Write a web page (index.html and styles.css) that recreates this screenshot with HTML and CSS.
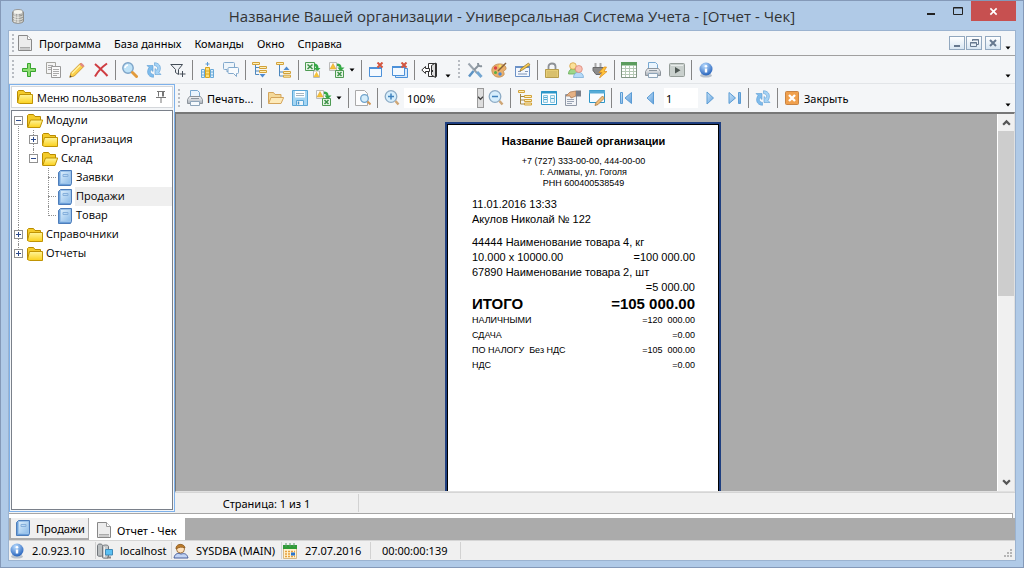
FILE: index.html
```html
<!DOCTYPE html>
<html lang="ru">
<head>
<meta charset="utf-8">
<title>Универсальная Система Учета - [Отчет - Чек]</title>
<link rel="stylesheet" href="styles.css">
</head>
<body>
<svg class="sprite" aria-hidden="true">
  <defs>
    <linearGradient id="gold" x1="0" y1="0" x2="0" y2="1"><stop offset="0" stop-color="#fff59a"/><stop offset="1" stop-color="#fbd01c"/></linearGradient>
    <linearGradient id="blue" x1="0" y1="0" x2="1" y2="1"><stop offset="0" stop-color="#c9e4fa"/><stop offset="1" stop-color="#5f9fdc"/></linearGradient>
    <linearGradient id="page" x1="0" y1="0" x2="1" y2="1"><stop offset="0" stop-color="#dceefc"/><stop offset="1" stop-color="#8cbbe8"/></linearGradient>
    <linearGradient id="steel" x1="0" y1="0" x2="0" y2="1"><stop offset="0" stop-color="#f4f6f8"/><stop offset="1" stop-color="#a9b0b8"/></linearGradient>
    <radialGradient id="ball" cx=".4" cy=".25" r=".8"><stop offset="0" stop-color="#b9dcff"/><stop offset="1" stop-color="#1e5cb8"/></radialGradient>
  </defs>
  <symbol id="i-app" viewBox="0 0 16 16"><path d="M2.500 4v9c0 3 11 3 11 0V4z" fill="#d3d3cd" stroke="#8c8c88"/><ellipse cx="8" cy="4" rx="5" ry="2.500" fill="#f4f4ee" stroke="#999"/><path d="M3 6.500c2 2 8 2 10 0M3 9c2 2 8 2 10 0M3 11.500c2 2 8 2 10 0" fill="none" stroke="#8f8f8b"/><path d="M5 5v9M8 6v9" stroke="#f4f4f0"/></symbol>
  <symbol id="i-doc" viewBox="0 0 16 16"><path d="M1.500.500h9l4 4v11h-13z" fill="#ececec" stroke="#888"/><path d="M10.500.500v4h4" fill="#fff" stroke="#999"/><path d="M3 12.500h10M3 14h10" stroke="#aaa"/></symbol>
  <symbol id="i-plus" viewBox="0 0 16 16"><path d="M6.500 1.500h3v5h5v3h-5v5h-3v-5h-5v-3h5z" fill="#8ddc72" stroke="#37a52e"/></symbol>
  <symbol id="i-copy" viewBox="0 0 16 16"><path d="M1.500.500h9v11h-9z" fill="#f4f4f4" stroke="#a5a5a0"/><path d="M3 3.500h5M3 5.500h3M3 7.500h3" stroke="#aaa"/><path d="M6.500 4.500h9v11h-9z" fill="#fafafa" stroke="#999"/><path d="M8 7.500h6M8 9.500h6M8 11.500h6M8 13.500h4" stroke="#aaa"/></symbol>
  <symbol id="i-pencil" viewBox="0 0 16 16"><path d="M.8 15.200l1.200-4.500L11.500 1.200l3.300 3.300-9.500 9.500z" fill="#fbd04c" stroke="#c88f1c" stroke-width=".8"/><path d="M10.500 2.200l3.300 3.300 1.500-2-2.800-2.800z" fill="#e28a84"/><path d="M3 11.500l8-8" stroke="#fff2a6" stroke-width="1.200"/><path d="M.6 15.400l2.200-.6-1.600-1.600z" fill="#444"/></symbol>
  <symbol id="i-x" viewBox="0 0 16 16"><path d="M2 2c4 3.500 9 8 12.500 12M14 1.500C9 5 5 9 2 14.500" fill="none" stroke="#cf3d42" stroke-width="2"/></symbol>
  <symbol id="i-find" viewBox="0 0 16 16"><circle cx="6" cy="6" r="5.200" fill="#bfe3f8" stroke="#7da4c8" stroke-width="1.400"/><path d="M3 6a3.500 3.500 0 0 1 3-3" fill="none" stroke="#fff" stroke-width="1.600"/><path d="M10.500 10.500l4 4" stroke="#e29b3d" stroke-width="3" stroke-linecap="round"/></symbol>
  <symbol id="i-refresh" viewBox="0 0 16 16"><path d="M1 3.500h6v6L5.200 7.800C3.500 9.800 4.500 12 7.500 12.500v2.800C1.500 15 .2 9.500 3 5.500z" fill="#7fbcec" stroke="#5b9cd4" stroke-width=".6"/><path d="M15 12.500H9v-6l1.800 1.700C12.500 6.200 11.500 4 8.500 3.500V.7C14.500 1 15.800 6.500 13 10.500z" fill="#a6d3f5" stroke="#5b9cd4" stroke-width=".6"/></symbol>
  <symbol id="i-filter" viewBox="0 0 16 16"><path d="M.8 2.500h11.700L8.500 7.500v5l-3-2v-3z" fill="#eef1f4" stroke="#444d57"/><path d="M12.500 9v6M9.500 12h6" stroke="#444d57"/></symbol>
  <symbol id="i-colfind" viewBox="0 0 16 16"><path d="M2.500 7.500h3v8h-3zM11.500 7.500h3v8h-3z" fill="#dff0fb" stroke="#68a9d8"/><path d="M2 10h4M2 13h4M11 10h4M11 13h4" stroke="#68a9d8"/><path d="M6.500 5.500h4v10h-4z" fill="#ffe178" stroke="#d9a41d"/><path d="M7 9h3M7 12h3" stroke="#d9a41d"/><path d="M8.500 0v4M6.500 2h4" stroke="#5b9bd5"/></symbol>
  <symbol id="i-chat" viewBox="0 0 16 16"><path d="M1.500.500h9q1 0 1 1v5q0 1-1 1h-4L4 10V7.500H1.500q-1 0-1-1v-5q0-1 1-1z" fill="#eef5fa" stroke="#82a9cc"/><path d="M6 5.500h8.500q1 0 1 1v4q0 1-1 1h-1V14.500l-3-3H6q-1 0-1-1v-4q0-1 1-1z" fill="#f8fbfd" stroke="#82a9cc"/></symbol>
  <symbol id="i-tree" viewBox="0 0 16 16"><path d="M3.500 4v10H8M3.500 6.500H8M3.500 10H8" fill="none" stroke="#a08444"/><path d="M1.500.500h6v2h-6zM7.500 5.500h7v2h-7zM7.500 9.500h7v2h-7zM7.500 13h7v2h-7z" fill="#fff0b8" stroke="#d2a23b"/></symbol>
  <symbol id="i-treedown" viewBox="0 0 16 16"><path d="M3.500 3v9.500H7M3.500 5.500H7M3.500 9H7" fill="none" stroke="#4e88bd"/><path d="M.5.500h7v2h-7zM7.500 4.500h7v2h-7zM7.500 8.500h7v2h-7z" fill="#fff0b8" stroke="#d2a23b"/><path d="M7.500 12h6l-3 3.500z" fill="#4f8bd0"/></symbol>
  <symbol id="i-treeup" viewBox="0 0 16 16"><path d="M3.500 3v11H7M3.500 10H7" fill="none" stroke="#4e88bd"/><path d="M.5.500h7v2h-7zM7.500 9.500h7v2h-7zM7.500 13.200h7v2h-7z" fill="#fff0b8" stroke="#d2a23b"/><path d="M7.500 8h6l-3-3.500z" fill="#4f8bd0"/></symbol>
  <symbol id="i-xlimp" viewBox="0 0 16 16"><path d="M.5.500h9v8h-9z" fill="#e7f5e6" stroke="#4e9b53"/><path d="M2.500 2.500l5 4.500M7.500 2.500l-5 4.500" stroke="#3b9146" stroke-width="1.500"/><path d="M9 1.500q4.500 0 4.500 4.500h2l-3.300 3.500L9 6h2q0-2-2-2z" fill="#35a846"/><path d="M8.500 9h6v6.500h-6z" fill="#fff" stroke="#b9b9b9"/><path d="M8.500 15l3-5.500L14.500 15z" fill="#f6c33b"/></symbol>
  <symbol id="i-xlexp" viewBox="0 0 16 16"><path d="M.5.500h7v8h-7z" fill="#fafafa" stroke="#bbb"/><path d="M1 7L4 1.500 7 7z" fill="#f6c33b" stroke="#d99d20" stroke-width=".5"/><path d="M8 1.500q4.500 0 4.500 4h3l-4 4-3-4h2q0-1.500-2.500-1.500z" fill="#35a846"/><path d="M6.500 8.500h8v7h-8z" fill="#e7f5e6" stroke="#4e9b53"/><path d="M8.500 10l4 4M12.500 10l-4 4" stroke="#3b9146" stroke-width="1.500"/></symbol>
  <symbol id="i-winx" viewBox="0 0 16 16"><path d="M1.500 5.500h12v9h-12z" fill="#f3f9ff" stroke="#4c91d9"/><path d="M1 6h13" stroke="#4c91d9" stroke-width="2"/><path d="M9.500.500l5 5M14.500.500l-5 5" stroke="#d3553f" stroke-width="2"/></symbol>
  <symbol id="i-winsx" viewBox="0 0 16 16"><path d="M3.500 6.500h12v9h-12z" fill="#d7e9fb" stroke="#4c91d9"/><path d="M.5 4.500h12v9H.5z" fill="#f3f9ff" stroke="#4c91d9"/><path d="M0 5h13" stroke="#4c91d9" stroke-width="2"/><path d="M9.500.500l5 5M14.500.500l-5 5" stroke="#d3553f" stroke-width="2"/></symbol>
  <symbol id="i-exit" viewBox="0 0 16 16"><path d="M7.500 1.500h8v13h-8z" fill="#fff" stroke="#333"/><path d="M10.500 3.500l4-2.500v14.500l-4-2.500z" fill="#ddd" stroke="#333"/><path d="M11.500 8v2" stroke="#333"/><path d="M.8 8L4.500 4.500v2h4v3h-4v2z" fill="#fff" stroke="#333"/></symbol>
  <symbol id="i-tools" viewBox="0 0 16 16"><path d="M1.500 1.500L10 11" stroke="#9aa4ad" stroke-width="2"/><path d="M10 10l4.500 5" stroke="#73a6d1" stroke-width="3"/><path d="M6.500 9L2 14.500" stroke="#5c93c4" stroke-width="2.500"/><path d="M7 8l5-5" stroke="#8a949d" stroke-width="2"/><path d="M11 1q0 4 4 3" fill="none" stroke="#8a949d" stroke-width="2"/></symbol>
  <symbol id="i-palette" viewBox="0 0 16 16"><path d="M.8 8c0-7 12-8 14-3 1 3-1 3-2 4s2 3-1 5c-5 3-11 0-11-6z" fill="#e9b06d" stroke="#c08d50" stroke-width=".8"/><circle cx="4.500" cy="6" r="1.700" fill="#d44"/><circle cx="9" cy="4" r="1.500" fill="#f9e35b"/><circle cx="4.500" cy="10.500" r="1.500" fill="#56ae45"/><circle cx="9" cy="12" r="1.700" fill="#4787d9"/><path d="M7 9l8-8" stroke="#876239" stroke-width="1.500"/></symbol>
  <symbol id="i-note" viewBox="0 0 16 16"><path d="M.5 4.500h14v10H.5z" fill="#f4f8fe" stroke="#6c92c7"/><path d="M3 9.500h3M3 12h9M10 9.500h3" stroke="#7f95b6"/><path d="M0 5h15" stroke="#6c92c7" stroke-width="2"/><path d="M5 9l1-2.500L13.500 1l1.500 2-7.500 5z" fill="#f6cb51" stroke="#94702a" stroke-width=".7"/></symbol>
  <symbol id="i-lock" viewBox="0 0 16 16"><path d="M4.500 8V4.500c0-4 7-4 7 0V8" fill="none" stroke="#8d9195" stroke-width="1.800"/><path d="M1.500 7.500h13v8h-13z" fill="#e6ce77" stroke="#b59c4d"/><path d="M3 10h10M3 12h10M3 14h10" stroke="#cbb262"/></symbol>
  <symbol id="i-users" viewBox="0 0 16 16"><path d="M.5 12c0-7 9-7 9 0z" fill="#9ed78a" stroke="#65ac55" stroke-width=".8"/><circle cx="5" cy="4" r="3.300" fill="#fbe29a" stroke="#d4a141" stroke-width=".8"/><path d="M5.500 15.500c0-7 10-7 10 0z" fill="#b5daf8" stroke="#7aafd8" stroke-width=".8"/><circle cx="10.800" cy="7" r="3.500" fill="#f9c0b3" stroke="#dc8877" stroke-width=".8"/></symbol>
  <symbol id="i-plug" viewBox="0 0 16 16"><path d="M3.500 1v5M8.500 1v5" stroke="#aaa" stroke-width="2"/><path d="M1 5.500h10v3l-3 4H4L1 8.500z" fill="#8b8b8b" stroke="#6a6a6a"/><path d="M12 5l-5 5.500h3L7.500 16 15 9.500h-3L14.500 5z" fill="#ffc43b" stroke="#dc8b19" stroke-width=".7"/></symbol>
  <symbol id="i-grid" viewBox="0 0 16 16"><path d="M.5.500h15v15H.5z" fill="#fff" stroke="#809482"/><path d="M0 0h16v3.500H0z" fill="#5b9c5d"/><path d="M1 6.500h14M1 9.500h14M1 12.500h14M4.500 4v11M8.500 4v11M12.500 4v11" stroke="#b5c9b5"/></symbol>
  <symbol id="i-print" viewBox="0 0 16 16"><path d="M3.500 8V.5h7l2 2V8" fill="#eaf5fe" stroke="#78a8d1"/><path d="M.5 9.500l2-3h11l2 3v4H.5z" fill="url(#steel)" stroke="#8d949b"/><path d="M3.500 11.500h9v4h-9z" fill="#f6fafd" stroke="#8fa6bb"/><path d="M4 8.500h8" stroke="#8b959e"/></symbol>
  <symbol id="i-play" viewBox="0 0 16 16"><rect x=".5" y="1.500" width="15" height="13" rx="1" fill="#c9d0cd" stroke="#959d99"/><path d="M2 3.500h12" stroke="#e8ecea"/><path d="M6 5v6.500L11.500 8.200z" fill="#4f5854"/></symbol>
  <symbol id="i-info" viewBox="0 0 16 16"><ellipse cx="8" cy="13.500" rx="6" ry="2" fill="#b9c2cc"/><circle cx="8" cy="7" r="6.500" fill="url(#ball)"/><path d="M8 6.500v4" stroke="#fff" stroke-width="2.400"/><circle cx="8" cy="4.300" r="1.300" fill="#fff"/></symbol>
  <symbol id="i-folder" viewBox="0 0 16 16"><path d="M.5 13.500v-11l1-1h5l1.500 2h5.500V6" fill="#f4cb2a" stroke="#b98b00"/><path d="M2.500 5.500h13v9h-13l-2-1z" fill="url(#gold)" stroke="#c09405"/></symbol>
  <symbol id="i-folderopen" viewBox="0 0 16 16"><path d="M.5 14v-11.500l1-1h5l1.500 2h5.500V7" fill="#f4cb2a" stroke="#b98b00"/><path d="M3.500 7h12.200L13 14.500H.7z" fill="url(#gold)" stroke="#c09405"/></symbol>
  <symbol id="i-open" viewBox="0 0 16 16"><path d="M.5 13.500v-11h5l1.500 2h6v3" fill="#f4d99a" stroke="#d4a55c"/><path d="M3 7.500h12.700L13 13.500H.6z" fill="#fdeab9" stroke="#d4a55c"/></symbol>
  <symbol id="i-save" viewBox="0 0 16 16"><path d="M.5.500h15v15H.5z" fill="#a4d5f3" stroke="#5ba6d6"/><path d="M3 1h10v6.500H3z" fill="#fff"/><path d="M4 3.500h8M4 5.500h8" stroke="#a3b4c0"/><path d="M4.500 10.500h7v5h-7z" fill="#eef6fb" stroke="#5ba6d6"/><path d="M6.500 11.500v3" stroke="#4591c7" stroke-width="1.500"/></symbol>
  <symbol id="i-preview" viewBox="0 0 16 16"><path d="M.5.500h9l3 3v12H.5z" fill="#fdfdfd" stroke="#aaa"/><circle cx="9.500" cy="8.500" r="3.800" fill="#d6eefb" stroke="#6fa3cc" stroke-width="1.300"/><path d="M12.500 11.500l3 3" stroke="#d19857" stroke-width="2"/></symbol>
  <symbol id="i-zoomin" viewBox="0 0 16 16"><circle cx="7" cy="6.500" r="5.800" fill="#d6eefc" stroke="#8cabc5" stroke-width="1.300"/><path d="M4 6.500h6M7 3.500v6" stroke="#3f82bd" stroke-width="1.500"/><path d="M11.500 11l3 3.500" stroke="#cfa675" stroke-width="2.500"/></symbol>
  <symbol id="i-zoomout" viewBox="0 0 16 16"><circle cx="7" cy="6.500" r="5.800" fill="#d6eefc" stroke="#8cabc5" stroke-width="1.300"/><path d="M4 6.500h6" stroke="#3f82bd" stroke-width="1.500"/><path d="M11.500 11l3 3.500" stroke="#cfa675" stroke-width="2.500"/></symbol>
  <symbol id="i-panes" viewBox="0 0 16 16"><path d="M.5 1.500h15v13H.5z" fill="#fff" stroke="#2c96c8"/><path d="M0 2.500h16" stroke="#2c96c8" stroke-width="2"/><path d="M2.500 5.500h4v7h-4zM9.500 5.500h4v7h-4z" fill="#e4f4fb" stroke="#8cc6e0"/><path d="M3 7.500h3M3 9.500h3M10 8.500h3" stroke="#57acd3"/></symbol>
  <symbol id="i-hand" viewBox="0 0 16 16"><path d="M.5 4.500h11v11H.5z" fill="#f2f4f7" stroke="#9098a5"/><path d="M2 9.500h7M2 11.500h7M2 13.500h5" stroke="#9aa4b4"/><path d="M1 6l4-4 6-1v5L6 8 5 6z" fill="#e5b184" stroke="#a3744f" stroke-width=".7"/><path d="M11 .5h5v6h-5z" fill="#7b7f89"/></symbol>
  <symbol id="i-winedit" viewBox="0 0 16 16"><path d="M.5.500h15v12H.5z" fill="#f7fcff" stroke="#2c96c8"/><path d="M0 2h16" stroke="#55abd7" stroke-width="3"/><path d="M6 15.500l1-3L13.500 6l2 2L9 14.500z" fill="#f0bd78" stroke="#a97840" stroke-width=".8"/></symbol>
  <symbol id="i-first" viewBox="0 0 16 16"><path d="M2.500 2.500h2v11h-2zM13.500 2.500v11L7 8z" fill="url(#blue)" stroke="#5b9cd4"/></symbol>
  <symbol id="i-prev" viewBox="0 0 16 16"><path d="M11.500 2v12L5 8z" fill="url(#blue)" stroke="#5b9cd4"/></symbol>
  <symbol id="i-next" viewBox="0 0 16 16"><path d="M5 2v12l6.500-6z" fill="url(#blue)" stroke="#5b9cd4"/></symbol>
  <symbol id="i-last" viewBox="0 0 16 16"><path d="M12.500 2.500h2v11h-2zM3 2.500v11L9.500 8z" fill="url(#blue)" stroke="#5b9cd4"/></symbol>
  <symbol id="i-close" viewBox="0 0 16 16"><rect x="1.500" y="1.500" width="13" height="13" rx="1" fill="#f0a04d" stroke="#c98443"/><path d="M5 5l6 6M11 5l-6 6" stroke="#fff" stroke-width="2.400"/></symbol>
  <symbol id="i-book" viewBox="0 0 16 16"><path d="M1.500 2.500l2-2h11v13l-1 2h-12z" fill="#6b9fd8" stroke="#4d7dbb"/><path d="M3.500 1.500h10v12h-10z" fill="url(#page)" stroke="#9cc3ea"/><path d="M6 4.500h5v2H6z" fill="none" stroke="#86b0dc"/></symbol>
  <symbol id="i-pin" viewBox="0 0 12 14"><path d="M2 1.500h8M3.500 1.500v5M8.500 1.500v5M7.500 1.500v5M1 7.500h10M6 7.500V13" fill="none" stroke="#777"/></symbol>
  <symbol id="i-servers" viewBox="0 0 16 16"><path d="M.5 2.500c0-2 5-2 5 0v10c0 1-5 1-5 0z" fill="#b9bdbf" stroke="#70757a"/><path d="M5.500 3.500c0-2 6-2 6 0v11c0 1-6 1-6 0z" fill="#c7cacc" stroke="#70757a"/><path d="M7.500 4v10" stroke="#eee"/><path d="M8.500 6.500h7v5.500h-7z" fill="#5cc0f2" stroke="#3f8ab8"/><path d="M10 14.500h4" stroke="#888" stroke-width="2"/></symbol>
  <symbol id="i-user" viewBox="0 0 16 16"><path d="M1 15c1-5 4-5 7-4 4-1 6 0 7 4z" fill="#c1d3f4" stroke="#495f9b"/><circle cx="7.500" cy="6" r="4" fill="#ffe2bd" stroke="#8b5a22" stroke-width=".8"/><path d="M3 6C2.500 0 11.500 0 12 5 8.500 3.500 6.500 4 3 6z" fill="#bd7d2c" stroke="#8b5a22" stroke-width=".8"/></symbol>
  <symbol id="i-calendar" viewBox="0 0 16 16"><path d="M1.500 3.500h13v12h-13z" fill="#fff2cf" stroke="#d6b984"/><path d="M1 2h14v4H1z" fill="#2f9b35"/><path d="M4 0v4M8 0v4M12 0v4" stroke="#596"/><path d="M3 8.500h10M3 11h10M3 13.500h10" stroke="#e8a03b" stroke-width="1.500" stroke-dasharray="2 1"/><path d="M9 9.500h4v3H9z" fill="#2b75cc"/></symbol>
  <symbol id="i-drop" viewBox="0 0 6 4"><path d="M.5.500h5L3 3.500z" fill="#000"/></symbol>
  <symbol id="i-minus" viewBox="0 0 9 9"><path d="M2 4.500h5" stroke="#2c4a8c"/></symbol>
  <symbol id="i-expand" viewBox="0 0 9 9"><path d="M2 4.500h5M4.500 2v5" stroke="#2c4a8c"/></symbol>
</svg>

<div class="window">
  <header class="titlebar">
    <svg class="icon"><use href="#i-app"/></svg>
    <h1 class="title">Название Вашей организации - Универсальная Система Учета - [Отчет - Чек]</h1>
    <div class="window-buttons">
      <button class="win-btn" aria-label="Свернуть"><svg class="win-glyph" viewBox="0 0 10 10"><path d="M1 8h8" stroke="#222" stroke-width="2"/></svg></button>
      <button class="win-btn" aria-label="Развернуть"><svg class="win-glyph" viewBox="0 0 10 10"><path d="M.5 1.500h9v7h-9zM.5 2h9" fill="none" stroke="#222"/></svg></button>
      <button class="win-btn win-close" aria-label="Закрыть окно"><svg class="win-glyph win-glyph-x" viewBox="0 0 10 10"><path d="M1.500 1.500l7 7M8.500 1.500l-7 7" stroke="#fff" stroke-width="1.800"/></svg></button>
    </div>
  </header>

  <div class="client">
    <nav class="menubar">
      <span class="grip"></span>
      <svg class="icon menu-icon"><use href="#i-doc"/></svg>
      <button class="menu">Программа</button>
      <button class="menu">База данных</button>
      <button class="menu">Команды</button>
      <button class="menu">Окно</button>
      <button class="menu">Справка</button>
      <div class="mdi">
        <button class="mdi-btn" aria-label="Свернуть отчет"><svg viewBox="0 0 14 12"><path d="M4 9h6" stroke="#66788f" stroke-width="2"/></svg></button>
        <button class="mdi-btn" aria-label="Восстановить отчет"><svg viewBox="0 0 14 12"><path d="M5.500 4V2.500h6v5H10M3.500 5.500h6v4h-6zM5 3h7M3 6h7" fill="none" stroke="#66788f"/></svg></button>
        <button class="mdi-btn mdi-close" aria-label="Закрыть отчет"><svg viewBox="0 0 14 12"><path d="M4 3l6 6M10 3L4 9" stroke="#66788f" stroke-width="2"/></svg></button>
      </div>
      <button class="more" aria-label="Настройка меню"><svg class="drop"><use href="#i-drop"/></svg></button>
    </nav>

    <div class="toolbar toolbar-main">
      <span class="grip"></span>
      <button class="tool" aria-label="Добавить"><svg class="icon"><use href="#i-plus"/></svg></button>
      <button class="tool" aria-label="Копировать"><svg class="icon"><use href="#i-copy"/></svg></button>
      <button class="tool" aria-label="Изменить"><svg class="icon"><use href="#i-pencil"/></svg></button>
      <button class="tool" aria-label="Удалить"><svg class="icon"><use href="#i-x"/></svg></button>
      <span class="sep"></span>
      <button class="tool" aria-label="Поиск"><svg class="icon"><use href="#i-find"/></svg></button>
      <button class="tool" aria-label="Обновить"><svg class="icon"><use href="#i-refresh"/></svg></button>
      <button class="tool" aria-label="Фильтр"><svg class="icon"><use href="#i-filter"/></svg></button>
      <span class="sep"></span>
      <button class="tool" aria-label="Столбцы"><svg class="icon"><use href="#i-colfind"/></svg></button>
      <button class="tool" aria-label="Примечания"><svg class="icon"><use href="#i-chat"/></svg></button>
      <span class="sep"></span>
      <button class="tool" aria-label="Развернуть все"><svg class="icon"><use href="#i-treedown"/></svg></button>
      <button class="tool" aria-label="Свернуть все"><svg class="icon"><use href="#i-treeup"/></svg></button>
      <span class="sep"></span>
      <button class="tool" aria-label="Импорт"><svg class="icon"><use href="#i-xlimp"/></svg></button>
      <button class="tool" aria-label="Экспорт"><svg class="icon"><use href="#i-xlexp"/></svg></button>
      <button class="tool-drop" aria-label="Варианты экспорта"><svg class="drop"><use href="#i-drop"/></svg></button>
      <span class="sep"></span>
      <button class="tool" aria-label="Закрыть вкладку"><svg class="icon"><use href="#i-winx"/></svg></button>
      <button class="tool" aria-label="Закрыть все вкладки"><svg class="icon"><use href="#i-winsx"/></svg></button>
      <span class="sep"></span>
      <button class="tool" aria-label="Выход"><svg class="icon"><use href="#i-exit"/></svg></button>
      <button class="more" aria-label="Настройка панели"><svg class="drop"><use href="#i-drop"/></svg></button>
      <span class="grip"></span>
      <button class="tool" aria-label="Настройки"><svg class="icon"><use href="#i-tools"/></svg></button>
      <button class="tool" aria-label="Оформление"><svg class="icon"><use href="#i-palette"/></svg></button>
      <button class="tool" aria-label="Редактор"><svg class="icon"><use href="#i-note"/></svg></button>
      <span class="sep"></span>
      <button class="tool" aria-label="Блокировка"><svg class="icon"><use href="#i-lock"/></svg></button>
      <button class="tool" aria-label="Пользователи"><svg class="icon"><use href="#i-users"/></svg></button>
      <button class="tool" aria-label="Подключение"><svg class="icon"><use href="#i-plug"/></svg></button>
      <span class="sep"></span>
      <button class="tool" aria-label="Таблица"><svg class="icon"><use href="#i-grid"/></svg></button>
      <button class="tool" aria-label="Печать таблицы"><svg class="icon"><use href="#i-print"/></svg></button>
      <button class="tool" aria-label="Видео"><svg class="icon"><use href="#i-play"/></svg></button>
      <span class="sep"></span>
      <button class="tool" aria-label="О программе"><svg class="icon"><use href="#i-info"/></svg></button>
      <button class="more more-end" aria-label="Еще"><svg class="drop"><use href="#i-drop"/></svg></button>
    </div>

    <div class="workspace">
      <aside class="sidebar">
        <div class="sidebar-head">
          <svg class="icon"><use href="#i-folder"/></svg>
          <h2 class="sidebar-title">Меню пользователя</h2>
          <button class="pin" aria-label="Закрепить"><svg class="pin-icon"><use href="#i-pin"/></svg></button>
        </div>
        <ul class="tree">
          <li class="node">
            <div class="row"><button class="toggle" aria-label="Свернуть Модули"><svg><use href="#i-minus"/></svg></button><svg class="icon"><use href="#i-folderopen"/></svg><a class="label" href="#modules">Модули</a></div>
            <ul class="branch">
              <li class="node">
                <div class="row"><button class="toggle" aria-label="Развернуть Организация"><svg><use href="#i-expand"/></svg></button><svg class="icon"><use href="#i-folder"/></svg><a class="label" href="#org">Организация</a></div>
              </li>
              <li class="node">
                <div class="row"><button class="toggle" aria-label="Свернуть Склад"><svg><use href="#i-minus"/></svg></button><svg class="icon"><use href="#i-folderopen"/></svg><a class="label" href="#stock">Склад</a></div>
                <ul class="branch">
                  <li class="node"><div class="row"><span class="leaf"></span><svg class="icon"><use href="#i-book"/></svg><a class="label" href="#orders">Заявки</a></div></li>
                  <li class="node"><div class="row"><span class="leaf"></span><svg class="icon"><use href="#i-book"/></svg><a class="label selected" href="#sales">Продажи</a></div></li>
                  <li class="node"><div class="row"><span class="leaf"></span><svg class="icon"><use href="#i-book"/></svg><a class="label" href="#goods">Товар</a></div></li>
                </ul>
              </li>
            </ul>
          </li>
          <li class="node">
            <div class="row"><button class="toggle" aria-label="Развернуть Справочники"><svg><use href="#i-expand"/></svg></button><svg class="icon"><use href="#i-folder"/></svg><a class="label" href="#refs">Справочники</a></div>
          </li>
          <li class="node">
            <div class="row"><button class="toggle" aria-label="Развернуть Отчеты"><svg><use href="#i-expand"/></svg></button><svg class="icon"><use href="#i-folder"/></svg><a class="label" href="#reports">Отчеты</a></div>
          </li>
        </ul>
      </aside>

      <main class="report">
        <div class="toolbar">
          <span class="grip"></span>
          <button class="tool-text tool-print"><svg class="icon"><use href="#i-print"/></svg>Печать...</button>
          <span class="sep"></span>
          <button class="tool" aria-label="Открыть"><svg class="icon"><use href="#i-open"/></svg></button>
          <button class="tool" aria-label="Сохранить"><svg class="icon"><use href="#i-save"/></svg></button>
          <button class="tool" aria-label="Экспорт отчета"><svg class="icon"><use href="#i-xlexp"/></svg></button>
          <button class="tool-drop" aria-label="Форматы экспорта"><svg class="drop"><use href="#i-drop"/></svg></button>
          <span class="sep"></span>
          <button class="tool" aria-label="Найти в отчете"><svg class="icon"><use href="#i-preview"/></svg></button>
          <span class="sep"></span>
          <button class="tool" aria-label="Увеличить"><svg class="icon"><use href="#i-zoomin"/></svg></button>
          <div class="zoom">
            <select class="zoom-select" aria-label="Масштаб"><option>100%</option></select>
            <span class="zoom-arrow"><svg viewBox="0 0 6 6"><path d="M0 1.500l3 3 3-3" fill="none" stroke="#444" stroke-width="1.500"/></svg></span>
          </div>
          <button class="tool" aria-label="Уменьшить"><svg class="icon"><use href="#i-zoomout"/></svg></button>
          <span class="sep"></span>
          <button class="tool" aria-label="Структура"><svg class="icon"><use href="#i-tree"/></svg></button>
          <button class="tool" aria-label="Миниатюры"><svg class="icon"><use href="#i-panes"/></svg></button>
          <button class="tool" aria-label="Параметры страницы"><svg class="icon"><use href="#i-hand"/></svg></button>
          <button class="tool" aria-label="Редактировать страницу"><svg class="icon"><use href="#i-winedit"/></svg></button>
          <span class="sep"></span>
          <button class="tool" aria-label="Первая страница"><svg class="icon"><use href="#i-first"/></svg></button>
          <button class="tool" aria-label="Предыдущая страница"><svg class="icon"><use href="#i-prev"/></svg></button>
          <input class="page-input" type="text" value="1" aria-label="Номер страницы">
          <button class="tool" aria-label="Следующая страница"><svg class="icon"><use href="#i-next"/></svg></button>
          <button class="tool" aria-label="Последняя страница"><svg class="icon"><use href="#i-last"/></svg></button>
          <span class="sep"></span>
          <button class="tool" aria-label="Обновить отчет"><svg class="icon"><use href="#i-refresh"/></svg></button>
          <span class="sep"></span>
          <button class="tool-text"><svg class="icon"><use href="#i-close"/></svg>Закрыть</button>
          <button class="more more-end" aria-label="Еще команды"><svg class="drop"><use href="#i-drop"/></svg></button>
        </div>

        <div class="preview">
          <div class="canvas">
            <article class="receipt">
              <h3 class="org">Название Вашей организации</h3>
              <div class="contacts">
                <p>+7 (727) 333-00-00, 444-00-00</p>
                <p>г. Алматы, ул. Гоголя</p>
                <p>РНН 600400538549</p>
              </div>
              <div class="issued">
                <p>11.01.2016 13:33</p>
                <p>Акулов Николай № 122</p>
              </div>
              <div class="items">
                <p>44444 Наименование товара 4, кг</p>
                <p class="line"><span>10.000 x 10000.00</span><span>=100 000.00</span></p>
                <p>67890 Наименование товара 2, шт</p>
                <p class="line line-end"><span>=5 000.00</span></p>
              </div>
              <p class="line total"><span>ИТОГО</span><span>=105 000.00</span></p>
              <div class="payments">
                <p class="line"><span>НАЛИЧНЫМИ</span><span>=120&nbsp; 000.00</span></p>
                <p class="line"><span>СДАЧА</span><span>=0.00</span></p>
                <p class="line"><span>ПО НАЛОГУ&nbsp; Без НДС</span><span>=105&nbsp; 000.00</span></p>
                <p class="line"><span>НДС</span><span>=0.00</span></p>
              </div>
            </article>
          </div>
          <div class="scrollbar">
            <button class="scroll-btn" aria-label="Вверх"><svg viewBox="0 0 8 8"><path d="M1 6l3-3 3 3" fill="none" stroke="#555" stroke-width="2"/></svg></button>
            <div class="scroll-track"><div class="scroll-thumb"></div></div>
            <button class="scroll-btn" aria-label="Вниз"><svg viewBox="0 0 8 8"><path d="M1 2l3 3 3-3" fill="none" stroke="#555" stroke-width="2"/></svg></button>
          </div>
        </div>
        <div class="page-status"><span class="page-count">Страница: 1 из 1</span></div>
      </main>
    </div>

    <div class="tabs-edge"></div>
    <div class="tabs">
      <button class="tab"><svg class="icon"><use href="#i-book"/></svg>Продажи</button>
      <button class="tab tab-active"><svg class="icon"><use href="#i-doc"/></svg>Отчет - Чек</button>
    </div>

    <footer class="statusbar">
      <span class="cell cell-version"><svg class="icon"><use href="#i-info"/></svg>2.0.923.10</span>
      <span class="cell cell-host"><svg class="icon"><use href="#i-servers"/></svg>localhost</span>
      <span class="cell cell-user"><svg class="icon"><use href="#i-user"/></svg>SYSDBA (MAIN)</span>
      <span class="cell cell-date"><svg class="icon"><use href="#i-calendar"/></svg>27.07.2016</span>
      <span class="cell cell-time">00:00:00:139</span>
      <svg class="resize" viewBox="0 0 9 9"><path d="M7 0h2v2H7zM4 3h2v2H4zM7 3h2v2H7zM1 6h2v2H1zM4 6h2v2H4zM7 6h2v2H7z" fill="#b5b5b5"/></svg>
    </footer>
  </div>
</div>
</body>
</html>
```
FILE: styles.css
```css
* {
  box-sizing: border-box;
}

body,
h1,
h2,
h3,
p,
ul {
  margin: 0;
  padding: 0;
}

ul {
  list-style: none;
}

body {
  font-family: "Noto Sans", "DejaVu Sans", sans-serif;
  font-size: 11px;
  color: #000;
}

button,
input,
select {
  font: inherit;
  color: inherit;
  margin: 0;
  padding: 0;
  border: 0;
  background: none;
}

button {
  display: flex;
  align-items: center;
  justify-content: center;
  flex: none;
  white-space: nowrap;
}

svg {
  display: block;
  flex: none;
}

.sprite {
  position: absolute;
  width: 0;
  height: 0;
}

.icon {
  width: 16px;
  height: 16px;
}

/* Window frame */

.window {
  display: flex;
  flex-direction: column;
  height: 100vh;
  padding: 0 7px 6px;
  border: 1px solid #8499b8;
  background: #b0cae7;
}

.titlebar {
  display: grid;
  grid-template-columns: 135px 1fr 135px;
  flex: none;
  height: 29px;
}

.titlebar .icon {
  align-self: center;
  margin-left: 2px;
}

.title {
  align-self: center;
  font-family: "Open Sans", "Noto Sans", sans-serif;
  font-size: 15px;
  font-weight: 400;
  line-height: 20px;
  text-align: center;
  color: #333;
  white-space: nowrap;
}

.window-buttons {
  display: flex;
  justify-content: flex-end;
  align-items: flex-start;
}

.win-btn {
  width: 27px;
  height: 20px;
}

.win-close {
  width: 45px;
  background: #c75050;
}

.win-glyph {
  width: 10px;
  height: 10px;
}

.win-glyph-x {
  width: 9px;
  height: 9px;
}

.client {
  display: flex;
  flex-direction: column;
  flex: 1;
  min-height: 0;
  border: 1px solid #9bb3d0;
  background: #f4f6f8;
}

/* Menu and toolbars */

.menubar {
  display: flex;
  align-items: center;
  flex: none;
  height: 25px;
  border-bottom: 1px solid #a0a0a0;
}

.grip {
  flex: none;
  width: 2px;
  height: 19px;
  margin: 0 3px;
  background: repeating-linear-gradient(#b8bcc2 0 2px, transparent 2px 4px);
}

.menu {
  height: 22px;
  margin-right: 1px;
  padding: 0 6px;
}

.mdi {
  display: flex;
  gap: 1px;
  margin-left: auto;
}

.mdi-btn {
  width: 16px;
  height: 14px;
  border: 1px solid #92a8bf;
  background: linear-gradient(#fff, #d8e6f3);
}

.mdi-btn svg {
  width: 14px;
  height: 12px;
}

.mdi-close {
  margin-left: 2px;
}

.more {
  align-items: flex-end;
  align-self: stretch;
  width: 14px;
  padding-bottom: 5px;
}

.more-end {
  margin-left: auto;
}

.drop {
  width: 6px;
  height: 4px;
}

.toolbar {
  display: flex;
  align-items: center;
  flex: none;
  height: 28px;
}

.toolbar-main {
  border-bottom: 1px solid #e2e5e8;
}

.tool {
  width: 24px;
  height: 24px;
}

.tool-drop {
  width: 10px;
  height: 24px;
  justify-content: flex-start;
}

.tool-text {
  height: 24px;
  gap: 4px;
  padding-left: 4px;
}

.tool-print {
  width: 76px;
  justify-content: flex-start;
}

.sep {
  flex: none;
  width: 1px;
  height: 20px;
  margin: 0 2px;
  background: #858585;
}

.zoom {
  position: relative;
  width: 80px;
  height: 20px;
}

.zoom-select {
  appearance: none;
  width: 100%;
  height: 20px;
  padding-left: 3px;
  background: #fff;
}

.zoom-arrow {
  position: absolute;
  top: 0;
  right: 0;
  display: flex;
  align-items: center;
  width: 7px;
  height: 20px;
  border: 1px solid #9a9a9a;
  background: #ddd;
  pointer-events: none;
}

.zoom-arrow svg {
  width: 5px;
  height: 6px;
}

.page-input {
  width: 34px;
  height: 20px;
  margin-left: 2px;
  padding: 0 2px;
  background: #fff;
}

/* User menu */

.workspace {
  display: flex;
  flex: 1;
  min-height: 0;
}

.sidebar {
  display: flex;
  flex-direction: column;
  flex: none;
  width: 166px;
  margin-bottom: 1px;
  padding: 1px;
  border: 1px solid #7eb1ea;
  background: #f4f6f8;
  font-family: "Open Sans", "Noto Sans", sans-serif;
}

.sidebar-head {
  display: flex;
  align-items: center;
  flex: none;
  height: 22px;
  margin-bottom: 2px;
  padding: 0 5px;
  border: 1px solid #d4d7db;
  background: #fff;
}

.sidebar-title {
  flex: 1;
  margin-left: 4px;
  font-size: 11px;
  font-weight: 400;
  white-space: nowrap;
}

.pin-icon {
  width: 12px;
  height: 14px;
}

.tree {
  flex: 1;
  border: 1px solid #7a808a;
  background: #fff;
}

.branch {
  padding-left: 15px;
}

.node {
  position: relative;
}

.node::before {
  content: "";
  position: absolute;
  top: 0;
  bottom: 0;
  left: 6px;
  border-left: 1px dotted #909090;
}

.tree > .node:first-child::before {
  top: 9px;
}

.node:last-child::before {
  bottom: auto;
  height: 10px;
}

.row {
  display: flex;
  align-items: center;
  height: 19px;
  padding-left: 2px;
}

.toggle {
  position: relative;
  width: 9px;
  height: 9px;
  margin-right: 4px;
  border: 1px solid #919191;
  background: #fff;
}

.toggle svg {
  width: 9px;
  height: 9px;
}

.leaf {
  flex: none;
  width: 8px;
  height: 1px;
  margin: 0 1px 0 4px;
  border-top: 1px dotted #909090;
}

.label {
  flex: 1;
  align-self: stretch;
  margin-left: 2px;
  padding-left: 1px;
  line-height: 18px;
  color: inherit;
  text-decoration: none;
  white-space: nowrap;
}

.selected {
  background: #efefef;
}

/* Report preview */

.report {
  display: flex;
  flex-direction: column;
  flex: 1;
  min-width: 0;
}

.preview {
  display: flex;
  flex: 1;
  min-height: 0;
  border: 1px solid #e0e0e0;
  border-top: 2px solid #777;
  border-left: 1px solid #777;
}

.canvas {
  display: flex;
  flex: 1;
  justify-content: center;
  padding: 8px 7px 0 0;
  overflow: hidden;
  background: #ababab;
}

.receipt {
  width: 276px;
  padding: 10px 24px 0 25px;
  border: 2px solid #1f3f80;
  border-bottom: 0;
  box-shadow: inset 1px 1px #000, inset -1px 0 #000;
  background: #fff;
  font-family: "Liberation Sans", Arial, sans-serif;
  font-size: 11px;
  line-height: 15px;
}

.org {
  font-size: 11px;
  text-align: center;
}

.contacts {
  margin: 7px 0 8px;
  font-size: 9px;
  line-height: 11px;
  text-align: center;
}

.items {
  margin-top: 8px;
}

.line {
  display: flex;
  justify-content: space-between;
  white-space: nowrap;
}

.line-end {
  justify-content: flex-end;
}

.total {
  font-size: 15px;
  font-weight: 700;
  line-height: 18px;
}

.payments {
  font-size: 9px;
}

.scrollbar {
  display: flex;
  flex-direction: column;
  flex: none;
  width: 17px;
  border-left: 1px solid #fff;
  background: #f0f0f0;
}

.scroll-btn {
  height: 17px;
}

.scroll-btn svg {
  width: 9px;
  height: 9px;
}

.scroll-track {
  flex: 1;
}

.scroll-thumb {
  height: 48%;
  background: #cdcdcd;
}

.page-status {
  display: flex;
  flex: none;
  height: 21px;
  padding: 1px 0;
  border-top: 1px solid #d5d5d5;
  background: #f0f0f0;
}

.page-count {
  width: 184px;
  border-right: 1px solid #d2d2d2;
  line-height: 20px;
  text-align: center;
}

/* Open documents */

.tabs-edge {
  flex: none;
  height: 5px;
  margin-right: 2px;
  border: 1px solid #a6a6a6;
  border-width: 1px 1px 0 0;
  background: #fff;
}

.tabs {
  display: flex;
  align-items: flex-start;
  flex: none;
  gap: 1px;
  height: 22px;
  padding-left: 2px;
  background: #ababab;
}

.tab {
  height: 20px;
  gap: 5px;
  padding: 0 3px 0 4px;
  background: #f0f0f0;
}

.tab-active {
  height: 22px;
  padding: 2px 8px 0 7px;
  background: #fff;
}

/* Status bar */

.statusbar {
  display: flex;
  align-items: center;
  flex: none;
  height: 20px;
  border-top: 1px solid #d5d5d5;
  background: #f0f0f0;
}

.cell {
  display: flex;
  align-items: center;
  gap: 7px;
  height: 17px;
  border-right: 1px solid #d2d2d2;
  white-space: nowrap;
}

.cell-version {
  width: 87px;
}

.cell-host {
  width: 76px;
  padding-left: 1px;
}

.cell-user {
  width: 110px;
  padding-left: 1px;
}

.cell-date {
  width: 89px;
}

.cell-time {
  width: 90px;
  padding-left: 11px;
}

.resize {
  width: 9px;
  height: 9px;
  margin: auto 3px 2px auto;
}
```
